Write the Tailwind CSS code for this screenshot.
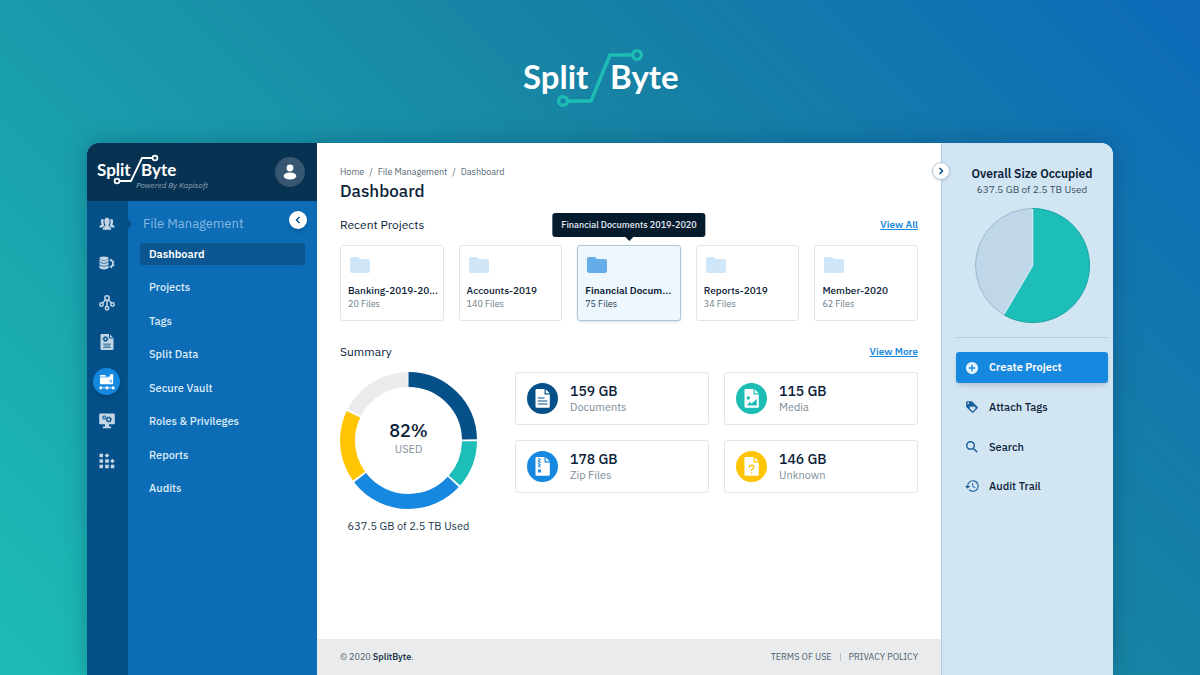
<!DOCTYPE html>
<html lang="en">
  <head>
    <meta charset="UTF-8" />
    <meta name="viewport" content="width=device-width, initial-scale=1.0" />
    <title>SplitByte - Dashboard</title>
    <script src="https://cdn.jsdelivr.net/npm/@tailwindcss/browser@4"></script>
  </head>
  <body
    class="flex min-h-screen flex-col bg-[linear-gradient(45deg,#1dbdb5_0%,#1782a4_64%,#0d6bb8_98%)] font-['IBM_Plex_Sans',Roboto,sans-serif] text-[#0b2138]"
  >
    <!-- Brand -->
    <header class="flex justify-center pt-12 pb-[35px]">
      <svg width="160" height="60" viewBox="0 0 160 60" role="img" aria-label="SplitByte">
        <g fill="#fff" font-family="Lato, sans-serif" font-weight="700" font-size="33">
          <text x="3" y="41">Split</text>
          <text x="90" y="41">Byte</text>
        </g>
        <g fill="none" stroke="#1dbdb5" stroke-width="3.4">
          <path d="M48 53H71L90 7H113" />
          <circle cx="43" cy="53" r="4.4" />
          <circle cx="117" cy="7" r="4.4" />
        </g>
      </svg>
    </header>

    <!-- App window -->
    <div
      class="mx-[87px] flex flex-1 overflow-hidden rounded-t-xl bg-white shadow-[0_0_24px_rgba(4,40,80,0.3)]"
    >
      <!-- Sidebar -->
      <aside class="flex w-[230px] shrink-0 flex-col bg-[#0c6cb5]">
        <div class="flex h-[58px] items-center justify-between bg-[#083251] pr-3 pl-[9px]">
          <div class="relative">
            <svg width="120" height="40" viewBox="0 0 120 40" role="img" aria-label="SplitByte">
              <g fill="#fff" font-family="Lato, sans-serif" font-weight="700" font-size="17">
                <text x="1" y="24">Split</text>
                <text x="45" y="24">Byte</text>
              </g>
              <g fill="none" stroke="#fff" stroke-width="1.8">
                <path d="M24 29H35L46 6H56" />
                <circle cx="21" cy="29" r="2.4" />
                <circle cx="59" cy="6" r="2.4" />
              </g>
            </svg>
            <p class="absolute bottom-[2px] left-10 text-[8px] leading-[10px] whitespace-nowrap text-[#90a5b7] italic">
              Powered By Kapisoft
            </p>
          </div>
          <button
            aria-label="Account"
            class="flex size-[30px] items-center justify-center rounded-full bg-[#365671]"
          >
            <svg width="16" height="16" viewBox="0 0 16 16" fill="#fff">
              <circle cx="8" cy="4" r="3.4" />
              <ellipse cx="8" cy="12" rx="6.4" ry="3.5" />
            </svg>
          </button>
        </div>

        <div class="flex flex-1">
          <!-- Icon rail -->
          <nav aria-label="Modules" class="w-[41px] bg-[#055089] pt-[9px]">
            <div class="flex h-[264px] flex-col items-center justify-between pr-[2px] text-[#c3d6e6]">
              <a href="#" aria-label="Users" class="relative flex h-[27px] items-center">
                <svg width="16" height="14" viewBox="0 0 16 14" fill="currentColor">
                  <path d="M3.500 2C2 2 1.700 3.500 2 5.500 2.200 6.500 2.500 7 2.700 7.500 1.500 8 .4 8.500.4 10.500H3.500C4 9.500 5 9 5.500 8.700 4.500 7.500 4.300 5 4.700 2.500 4.400 2.200 4 2 3.500 2ZM12.500 2C14 2 14.300 3.500 14 5.500 13.800 6.500 13.500 7 13.300 7.500 14.500 8 15.600 8.500 15.600 10.500H12.500C12 9.500 11 9 10.500 8.700 11.500 7.500 11.700 5 11.300 2.500 11.600 2.200 12 2 12.500 2Z" />
                  <path d="M8 .8C6 .8 5.200 2.200 5.400 4.500 5.500 6.500 6.300 7.700 6.500 8.200 6.500 9.300 3.800 9.500 3.700 12.800H12.300C12.200 9.500 9.500 9.300 9.500 8.200 9.700 7.700 10.500 6.500 10.600 4.500 10.800 2.200 10 .8 8 .8Z" />
                </svg>
              </a>
              <a href="#" aria-label="Data sources" class="flex h-[27px] items-center">
                <svg width="16" height="14" viewBox="0 0 16 14" fill="currentColor">
                  <ellipse cx="5" cy="2.300" rx="4.600" ry="1.800" />
                  <path d="M.4 3.300C2 5 8 5 9.600 3.300V5.200C8 7.200 2 7.200.4 5.200ZM.4 6.300C2 8 8 8 9.600 6.300V8.200C8 10.200 2 10.200.4 8.200ZM.4 9.300C2 11 8 11 9.600 9.300V11.700C8 14 2 14 .4 11.700Z" />
                  <path d="M10.800 4.300A3.200 3.200 0 0 1 10.800 10.700" fill="none" stroke="currentColor" stroke-width="1.600" />
                  <path d="M12 4.600 12.700 3M13.400 6.300 15.200 5.400M13.400 8.700 15.200 9.600M12 10.400 12.700 12" stroke="currentColor" stroke-width="1.400" />
                </svg>
              </a>
              <a href="#" aria-label="Workflow" class="flex h-[27px] items-center">
                <svg width="16" height="16" viewBox="0 0 16 16" fill="none" stroke="currentColor" stroke-width="1.500">
                  <circle cx="8" cy="3" r="2.200" />
                  <circle cx="2.500" cy="9.500" r="1.700" />
                  <circle cx="8" cy="13.300" r="1.700" />
                  <circle cx="13.500" cy="9.500" r="1.700" />
                  <path d="M6.800 4.800 3.500 8M9.200 4.800 12.500 8M8 5.300V11.500" />
                </svg>
              </a>
              <a href="#" aria-label="Templates" class="flex h-[27px] items-center">
                <svg width="14" height="16" viewBox="0 0 14 16">
                  <path d="M1.500 0H9.500L13.500 4V14.500Q13.500 16 12 16H2Q.5 16 .5 14.500V1Q.5 0 1.500 0Z" fill="currentColor" />
                  <path d="M9.500 0V4H13.500" fill="none" stroke="#055089" stroke-width="1" />
                  <circle cx="5.500" cy="5" r="1.700" fill="none" stroke="#055089" stroke-width="1.300" />
                  <circle cx="5.500" cy="5" r="2.600" fill="none" stroke="#055089" stroke-width=".8" stroke-dasharray="1.020" />
                  <path d="M3.500 10H10.500V13.500H3.500Z" fill="#055089" opacity=".35" />
                  <path d="M3 10H11M3 13.500H11" stroke="#055089" stroke-width=".6" />
                </svg>
              </a>
              <a
                href="#"
                aria-label="File Management"
                aria-current="page"
                class="flex size-[27px] items-center justify-center rounded-full bg-[#1788e0] text-white shadow-md"
              >
                <svg width="16" height="16" viewBox="0 0 16 16" fill="currentColor">
                  <path d="M1.800 1H6L7 2V3L11 2V.3H14.200V9.300Q14.200 10.300 13.200 10.300H2Q1 10.300 1 9.300V1.800Q1 1 1.800 1Z" />
                  <path d="M1 3H10.200V1.200" fill="none" stroke="#1788e0" stroke-width=".6" />
                  <path d="M10.500 6.400H13M10.500 8H13" stroke="#1788e0" stroke-width=".7" />
                  <path d="M.5 12.500H3V15.200H.5ZM6.700 12.500H9.300V15.200H6.700ZM13 12.500H15.500V15.200H13ZM2 13.500H14V14.200H2Z" />
                </svg>
              </a>
              <a href="#" aria-label="System" class="flex h-[27px] items-center">
                <svg width="16" height="16" viewBox="0 0 16 16">
                  <path d="M1 .5H15Q15.800.5 15.800 1.300V10.500Q15.800 11.300 15 11.300H10V13.500H12.200V15.300H3.800V13.500H6V11.300H1Q.2 11.300.2 10.500V1.300Q.2.5 1 .5Z" fill="currentColor" />
                  <g fill="none" stroke="#055089">
                    <circle cx="5.300" cy="4.500" r="1.300" stroke-width="1" />
                    <circle cx="5.300" cy="4.500" r="2" stroke-width=".6" stroke-dasharray=".780" />
                    <circle cx="9.800" cy="6.500" r="1.900" stroke-width="1.200" />
                    <circle cx="9.800" cy="6.500" r="2.800" stroke-width=".7" stroke-dasharray="1.100" />
                  </g>
                </svg>
              </a>
              <a href="#" aria-label="Apps" class="flex h-[27px] items-center">
                <svg width="16" height="16" viewBox="0 0 16 16" fill="currentColor">
                  <path d="M.5.8H4V4.300H.5ZM8 .2 10.300 2.500 8 4.800 5.700 2.500ZM.5 6.300H4V9.800H.5ZM6.200 6.300H9.800V9.800H6.200ZM13.400 5.700 15.700 8 13.400 10.300 11.100 8ZM.5 11.800H4V15.300H.5ZM6.200 11.800H9.800V15.300H6.200ZM11.800 11.800H15.300V15.300H11.800Z" />
                </svg>
              </a>
            </div>
          </nav>

          <!-- Section menu -->
          <nav aria-label="File Management" class="relative flex-1 pr-3 pl-3">
            <svg class="absolute top-[18px] left-0" width="4" height="10" viewBox="0 0 4 10" fill="#055089">
              <path d="M0 0 4 5 0 10Z" />
            </svg>
            <div class="flex items-center justify-between pt-[5px] pl-[3px]">
              <h2 class="pt-2 text-[13px] leading-5 text-[#86b8e2]">File Management</h2>
              <button
                aria-label="Collapse menu"
                class="-mr-[2px] flex size-[18px] items-center justify-center rounded-full bg-white text-[#055089] shadow-md"
              >
                <svg width="8" height="8" viewBox="0 0 8 8" fill="none" stroke="currentColor" stroke-width="1.500">
                  <path d="M5.500 1 2.500 4 5.500 7" />
                </svg>
              </button>
            </div>
            <ul class="mt-[9px] flex h-[256px] flex-col justify-between text-[11px] leading-[22px] font-medium text-[#dcebf8]">
              <li>
                <a href="#" aria-current="page" class="block rounded-[3px] bg-[#0b5690] px-[9px] font-semibold text-white">Dashboard</a>
              </li>
              <li><a href="#" class="block px-[9px]">Projects</a></li>
              <li><a href="#" class="block px-[9px]">Tags</a></li>
              <li><a href="#" class="block px-[9px]">Split Data</a></li>
              <li><a href="#" class="block px-[9px]">Secure Vault</a></li>
              <li><a href="#" class="block px-[9px]">Roles &amp; Privileges</a></li>
              <li><a href="#" class="block px-[9px]">Reports</a></li>
              <li><a href="#" class="block px-[9px]">Audits</a></li>
            </ul>
          </nav>
        </div>
      </aside>

      <!-- Main content -->
      <div class="flex min-w-0 flex-1 flex-col">
        <main class="px-[23px] pt-[22px]">
          <nav aria-label="Breadcrumb" class="flex gap-[5px] text-[9px] leading-[14px] text-[#566876]">
            <a href="#">Home</a>
            <span>/</span>
            <a href="#">File Management</a>
            <span>/</span>
            <a href="#">Dashboard</a>
          </nav>
          <h1 class="text-[17px] leading-6 font-medium">Dashboard</h1>

          <!-- Recent projects -->
          <section>
            <div class="mt-3 flex items-center justify-between">
              <h2 class="text-xs leading-5">Recent Projects</h2>
              <a href="#" class="text-[10px] leading-5 font-semibold text-[#1788e0] underline">View All</a>
            </div>
            <div class="mt-[10px] grid grid-cols-5 gap-[15px]">
              <a href="#" class="rounded-[3px] border border-[#e3e6e8] px-[7px] pt-[7px] pb-[10px]">
                <svg width="24" height="24" viewBox="0 0 24 24" fill="#cfe6f8">
                  <path d="M10 4H4C2.900 4 2 4.900 2 6V18C2 19.100 2.900 20 4 20H20C21.100 20 22 19.100 22 18V8C22 6.900 21.100 6 20 6H12Z" />
                </svg>
                <h3 class="mt-[7px] text-[10px] leading-[14px] font-medium whitespace-nowrap">Banking-2019-20...</h3>
                <p class="text-[9px] leading-3 text-[#6b7c89]">20 Files</p>
              </a>
              <a href="#" class="rounded-[3px] border border-[#e3e6e8] px-[7px] pt-[7px] pb-[10px]">
                <svg width="24" height="24" viewBox="0 0 24 24" fill="#cfe6f8">
                  <path d="M10 4H4C2.900 4 2 4.900 2 6V18C2 19.100 2.900 20 4 20H20C21.100 20 22 19.100 22 18V8C22 6.900 21.100 6 20 6H12Z" />
                </svg>
                <h3 class="mt-[7px] text-[10px] leading-[14px] font-medium whitespace-nowrap">Accounts-2019</h3>
                <p class="text-[9px] leading-3 text-[#6b7c89]">140 Files</p>
              </a>
              <a
                href="#"
                aria-describedby="project-tip"
                class="relative rounded-[3px] border border-[#a9c8de] bg-[#eff7fe] px-[7px] pt-[7px] pb-[10px] shadow-sm"
              >
                <span
                  id="project-tip"
                  role="tooltip"
                  class="absolute bottom-full left-1/2 mb-[9px] -translate-x-1/2 rounded-[3px] bg-[#061b2c] px-[9px] text-[9px] leading-6 font-medium whitespace-nowrap text-[#e6edf3]"
                >
                  Financial Documents 2019-2020
                  <svg class="absolute top-full left-1/2 -translate-x-1/2" width="8" height="4" viewBox="0 0 8 4" fill="#061b2c">
                    <path d="M0 0H8L4 4Z" />
                  </svg>
                </span>
                <svg width="24" height="24" viewBox="0 0 24 24" fill="#65ade9">
                  <path d="M10 4H4C2.900 4 2 4.900 2 6V18C2 19.100 2.900 20 4 20H20C21.100 20 22 19.100 22 18V8C22 6.900 21.100 6 20 6H12Z" />
                </svg>
                <h3 class="mt-[7px] text-[10px] leading-[14px] font-semibold whitespace-nowrap">Financial Docum...</h3>
                <p class="text-[9px] leading-3 text-[#243b50]">75 Files</p>
              </a>
              <a href="#" class="rounded-[3px] border border-[#e3e6e8] px-[7px] pt-[7px] pb-[10px]">
                <svg width="24" height="24" viewBox="0 0 24 24" fill="#cfe6f8">
                  <path d="M10 4H4C2.900 4 2 4.900 2 6V18C2 19.100 2.900 20 4 20H20C21.100 20 22 19.100 22 18V8C22 6.900 21.100 6 20 6H12Z" />
                </svg>
                <h3 class="mt-[7px] text-[10px] leading-[14px] font-medium whitespace-nowrap">Reports-2019</h3>
                <p class="text-[9px] leading-3 text-[#6b7c89]">34 Files</p>
              </a>
              <a href="#" class="rounded-[3px] border border-[#e3e6e8] px-[7px] pt-[7px] pb-[10px]">
                <svg width="24" height="24" viewBox="0 0 24 24" fill="#cfe6f8">
                  <path d="M10 4H4C2.900 4 2 4.900 2 6V18C2 19.100 2.900 20 4 20H20C21.100 20 22 19.100 22 18V8C22 6.900 21.100 6 20 6H12Z" />
                </svg>
                <h3 class="mt-[7px] text-[10px] leading-[14px] font-medium whitespace-nowrap">Member-2020</h3>
                <p class="text-[9px] leading-3 text-[#6b7c89]">62 Files</p>
              </a>
            </div>
          </section>

          <!-- Summary -->
          <section>
            <div class="mt-[21px] flex items-center justify-between">
              <h2 class="text-xs leading-5">Summary</h2>
              <a href="#" class="text-[10px] leading-5 font-semibold text-[#1788e0] underline">View More</a>
            </div>
            <div class="mt-[10px] flex items-start gap-[38px]">
              <div class="w-[137px] shrink-0">
                <div class="relative">
                  <svg class="w-full" viewBox="0 0 137 137" fill="none" stroke-width="15">
                    <g transform="rotate(-90 68.500 68.500)">
                      <circle cx="68.500" cy="68.500" r="61" pathLength="100" stroke="#055089" stroke-dasharray="24.700 75.300" />
                      <circle cx="68.500" cy="68.500" r="61" pathLength="100" stroke="#1dbdb8" stroke-dasharray="11.200 88.800" stroke-dashoffset="-25.200" />
                      <circle cx="68.500" cy="68.500" r="61" pathLength="100" stroke="#1788e0" stroke-dasharray="27.700 72.300" stroke-dashoffset="-36.900" />
                      <circle cx="68.500" cy="68.500" r="61" pathLength="100" stroke="#ffc403" stroke-dasharray="17 83" stroke-dashoffset="-65.100" />
                      <circle cx="68.500" cy="68.500" r="61" pathLength="100" stroke="#e9ebed" stroke-dasharray="17.200 82.800" stroke-dashoffset="-82.600" />
                    </g>
                  </svg>
                  <div class="absolute inset-0 flex flex-col items-center justify-center pb-[3px]">
                    <span class="text-lg leading-5 font-medium">82%</span>
                    <span class="text-[11px] leading-4 text-[#84919b]">USED</span>
                  </div>
                </div>
                <p class="mt-[7px] text-center text-[11px] leading-5 text-[#22384c]">637.5 GB of 2.5 TB Used</p>
              </div>

              <div class="grid flex-1 grid-cols-2 gap-[15px]">
                <div class="flex items-center gap-3 rounded-[3px] border border-[#e3e6e8] px-[11px] py-[9px]">
                  <svg width="31" height="31" viewBox="0 0 31 31">
                    <circle cx="15.500" cy="15.500" r="15.500" fill="#055089" />
                    <path d="M9.500 6H17.500V11.500H22.800V23.500Q22.800 24.700 21.600 24.700H9.700Q8.500 24.700 8.500 23.500V7Q8.500 6 9.500 6ZM18.700 6.200 22.700 10.300H18.700Z" fill="#fff" />
                    <path d="M10.800 15H17.500M10.800 18H20.500M10.800 21H20.500" stroke="#055089" stroke-width="1.200" />
                  </svg>
                  <div class="pt-[2px]">
                    <p class="text-sm leading-[15px] font-medium">159 GB</p>
                    <p class="text-[11px] leading-4 text-[#7d8b96]">Documents</p>
                  </div>
                </div>
                <div class="flex items-center gap-3 rounded-[3px] border border-[#e3e6e8] px-[11px] py-[9px]">
                  <svg width="31" height="31" viewBox="0 0 31 31">
                    <circle cx="15.500" cy="15.500" r="15.500" fill="#1dbdb5" />
                    <path d="M9.500 6H17.500V11.500H22.800V23.500Q22.800 24.700 21.600 24.700H9.700Q8.500 24.700 8.500 23.500V7Q8.500 6 9.500 6ZM18.700 6.200 22.700 10.300H18.700Z" fill="#fff" />
                    <circle cx="12.300" cy="15" r="1.700" fill="#1dbdb5" />
                    <path d="M11 22.500 13.800 18.800 15.500 20.500 20.800 16V22.500Z" fill="#1dbdb5" />
                  </svg>
                  <div class="pt-[2px]">
                    <p class="text-sm leading-[15px] font-medium">115 GB</p>
                    <p class="text-[11px] leading-4 text-[#7d8b96]">Media</p>
                  </div>
                </div>
                <div class="flex items-center gap-3 rounded-[3px] border border-[#e3e6e8] px-[11px] py-[9px]">
                  <svg width="31" height="31" viewBox="0 0 31 31">
                    <circle cx="15.500" cy="15.500" r="15.500" fill="#1788e0" />
                    <path d="M9.500 6H17.500V11.500H22.800V23.500Q22.800 24.700 21.600 24.700H9.700Q8.500 24.700 8.500 23.500V7Q8.500 6 9.500 6ZM18.700 6.200 22.700 10.300H18.700Z" fill="#fff" />
                    <path d="M11 7.500 13.500 8.700 11 10 13.500 11.300 11 12.600 13.500 13.900 11 15.200 13.500 16.500" fill="none" stroke="#1788e0" stroke-width="1" />
                    <path d="M11 18.500H14V21.500H11Z" fill="#1788e0" />
                  </svg>
                  <div class="pt-[2px]">
                    <p class="text-sm leading-[15px] font-medium">178 GB</p>
                    <p class="text-[11px] leading-4 text-[#7d8b96]">Zip Files</p>
                  </div>
                </div>
                <div class="flex items-center gap-3 rounded-[3px] border border-[#e3e6e8] px-[11px] py-[9px]">
                  <svg width="31" height="31" viewBox="0 0 31 31">
                    <circle cx="15.500" cy="15.500" r="15.500" fill="#ffc403" />
                    <path d="M9.500 6H17.500V11.500H22.800V23.500Q22.800 24.700 21.600 24.700H9.700Q8.500 24.700 8.500 23.500V7Q8.500 6 9.500 6ZM18.700 6.200 22.700 10.300H18.700Z" fill="#fff" />
                    <path d="M13.200 16.500Q13.200 14.300 15.500 14.300T17.800 16.300Q17.800 17.300 16.700 18T15.600 20M15.600 21.200V22.600" fill="none" stroke="#ffc403" stroke-width="1.400" />
                  </svg>
                  <div class="pt-[2px]">
                    <p class="text-sm leading-[15px] font-medium">146 GB</p>
                    <p class="text-[11px] leading-4 text-[#7d8b96]">Unknown</p>
                  </div>
                </div>
              </div>
            </div>
          </section>
        </main>

        <footer
          class="mt-auto flex h-9 items-center justify-between bg-[#e9ebed] px-[23px] text-[9px] text-[#4c5e6d]"
        >
          <p>© 2020 <strong class="font-semibold text-[#22384c]">SplitByte</strong>.</p>
          <div class="flex items-center gap-2">
            <a href="#">TERMS OF USE</a>
            <span class="h-2 w-px bg-[#b9c1c8]"></span>
            <a href="#">PRIVACY POLICY</a>
          </div>
        </footer>
      </div>

      <!-- Storage and actions -->
      <aside class="relative w-[172px] shrink-0 border-l border-[#b4cbdd] bg-[#d2e5f3] pt-[22px] pr-[5px] pl-[14px]">
        <button
          aria-label="Collapse panel"
          class="absolute top-[19px] -left-[10px] flex size-[18px] items-center justify-center rounded-full border border-[#b4cbdd] bg-white text-[#055089] shadow-sm"
        >
          <svg width="8" height="8" viewBox="0 0 8 8" fill="none" stroke="currentColor" stroke-width="1.500">
            <path d="M2.500 1 5.500 4 2.500 7" />
          </svg>
        </button>
        <h2 class="text-center text-xs leading-[17px] font-semibold">Overall Size Occupied</h2>
        <p class="text-center text-[10px] leading-[15px] text-[#3b5163]">637.5 GB of 2.5 TB Used</p>
        <svg class="mx-auto mt-[11px]" width="115" height="115" viewBox="0 0 115 115">
          <circle cx="57.500" cy="57.500" r="57" fill="#c0d6e9" stroke="#9db9cd" stroke-width="1" />
          <path d="M57.500.5A57 57 0 1 1 28.700 106.700L57.500 57.500Z" fill="#1dbdb8" stroke="#19a9a8" stroke-width="1" />
          <path d="M57.500 1V57.500L28.700 106.700" fill="none" stroke="#d2e5f3" stroke-width="1.500" />
        </svg>
        <hr class="mt-[14px] border-[#b4cbdd]" />
        <div class="mt-[14px] flex h-[150px] flex-col justify-between text-[11px] font-medium">
          <button class="flex h-[31px] items-center gap-[10px] rounded-[3px] bg-[#1788e0] pl-[9px] font-semibold text-white shadow-md">
            <svg width="14" height="14" viewBox="0 0 24 24" fill="#e6f2fc">
              <path d="M12 1.500A10.500 10.500 0 1 0 12 22.500 10.500 10.500 0 0 0 12 1.500ZM17.500 13.200H13.200V17.500H10.800V13.200H6.500V10.800H10.800V6.500H13.200V10.800H17.500Z" />
            </svg>
            Create Project
          </button>
          <button class="flex h-[31px] items-center gap-[10px] pl-[9px]">
            <svg width="14" height="14" viewBox="0 0 24 24" fill="#1b609c">
              <path d="M21.400 11.600 12.400 2.600C12 2.200 11.500 2 11 2H4C2.900 2 2 2.900 2 4V11C2 11.600 2.200 12.100 2.600 12.400L11.600 21.400C12.400 22.200 13.600 22.200 14.400 21.400L21.400 14.400C22.200 13.600 22.200 12.400 21.400 11.600ZM5.500 7C4.700 7 4 6.300 4 5.500S4.700 4 5.500 4 7 4.700 7 5.500 6.300 7 5.500 7ZM17.300 15.300 13 19.500 8.700 15.300C8.300 14.800 8 14.200 8 13.500 8 12.100 9.100 11 10.500 11 11.200 11 11.800 11.300 12.300 11.700L13 12.500 13.700 11.700C14.200 11.300 14.800 11 15.500 11 16.900 11 18 12.100 18 13.500 18 14.200 17.700 14.800 17.300 15.300Z" />
            </svg>
            Attach Tags
          </button>
          <button class="flex h-[31px] items-center gap-[10px] pl-[9px]">
            <svg width="14" height="14" viewBox="0 0 24 24" fill="none" stroke="#1b609c" stroke-width="2.500">
              <circle cx="9.500" cy="9.500" r="6.500" />
              <path d="M14.500 14.500 21 21" />
            </svg>
            Search
          </button>
          <button class="flex h-[31px] items-center gap-[10px] pl-[9px]">
            <svg width="14" height="14" viewBox="0 0 24 24" fill="#1b609c">
              <path d="M13.500 2A10 10 0 0 0 3.500 12H0L4.500 16.500 9 12H5.500A8 8 0 1 1 7.800 17.700L6.400 19.100A10 10 0 1 0 13.500 2ZM12.500 7V13L17.300 15.900 18.100 14.600 14 12.200V7Z" />
            </svg>
            Audit Trail
          </button>
        </div>
      </aside>
    </div>
  </body>
</html>
